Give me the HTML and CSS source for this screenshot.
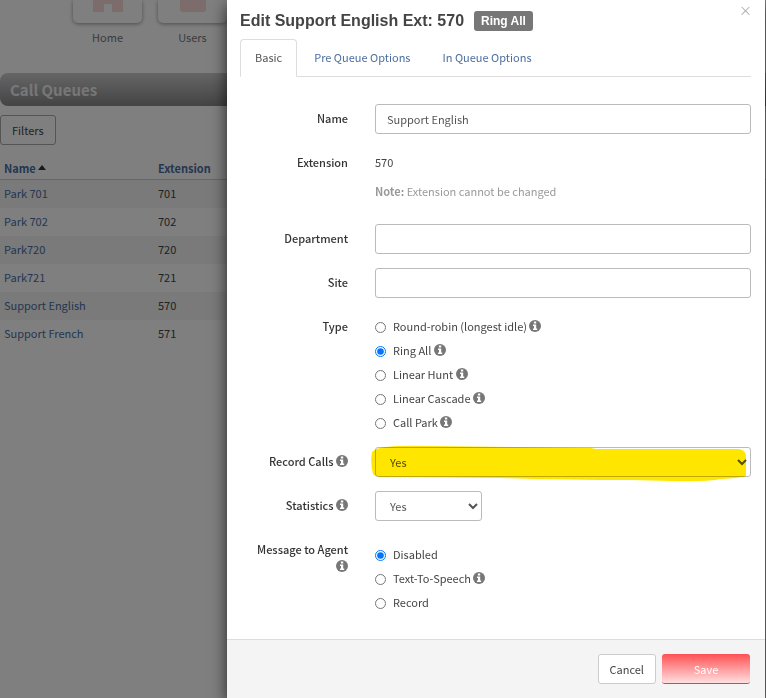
FILE: index.html
```
<!DOCTYPE html>
<html lang="en">
<head>
  <meta charset="UTF-8">
  <meta name="viewport" content="width=device-width, initial-scale=1">
  <title>Call Queues</title>
  <link rel="stylesheet" href="styles.css">
</head>
<body>
  <svg class="sprite" aria-hidden="true">
    <symbol id="info" viewBox="0 0 12 12">
      <circle cx="6" cy="6" r="6" fill="#777"/>
      <path d="M4.900 1.600h2.300v1.900H4.900zM4 4.600h3.200v3.900h1v1.400H4V8.500h1V6H4z" fill="#fff"/>
    </symbol>
  </svg>

  <div class="page">
    <nav class="apps">
      <a class="app" href="#">
        <span class="tile"><svg width="30" height="30" viewBox="0 0 30 30"><path d="M15 2L0 14v16h11v-8h8v8h11V14z" fill="#f8d8d8"/></svg></span>
        Home
      </a>
      <a class="app" href="#">
        <span class="tile"><svg width="26" height="30" viewBox="0 0 26 30"><circle cx="13" cy="8" r="7" fill="#f8d8d8"/><path d="M0 17h26v10q0 3-3 3H3q-3 0-3-3z" fill="#f8d8d8"/></svg></span>
        Users
      </a>
    </nav>
    <h2 class="page-title">Call Queues</h2>
    <button class="btn filters" type="button">Filters</button>
    <table class="queues">
      <thead>
        <tr><th><a href="#">Name <span class="caret"></span></a></th><th><a href="#">Extension</a></th></tr>
      </thead>
      <tbody>
        <tr><td><a href="#">Park 701</a></td><td>701</td></tr>
        <tr><td><a href="#">Park 702</a></td><td>702</td></tr>
        <tr><td><a href="#">Park720</a></td><td>720</td></tr>
        <tr><td><a href="#">Park721</a></td><td>721</td></tr>
        <tr><td><a href="#">Support English</a></td><td>570</td></tr>
        <tr><td><a href="#">Support French</a></td><td>571</td></tr>
      </tbody>
    </table>
  </div>

  <div class="backdrop"></div>

  <form class="modal" role="dialog" aria-labelledby="modal-title">
    <button class="close" type="button" aria-label="Close">&times;</button>
    <header class="modal-header">
      <h1 id="modal-title">Edit Support English Ext: 570</h1>
      <span class="badge">Ring All</span>
    </header>

    <nav class="tabs">
      <a class="tab active" href="#">Basic</a>
      <a class="tab" href="#">Pre Queue Options</a>
      <a class="tab" href="#">In Queue Options</a>
    </nav>

    <div class="modal-body">
      <div class="row">
        <label class="label" for="name">Name</label>
        <input class="control" id="name" type="text" value="Support English">
      </div>
      <div class="row">
        <span class="label">Extension</span>
        <div class="static">
          <p>570</p>
          <p class="note"><b>Note:</b> Extension cannot be changed</p>
        </div>
      </div>
      <div class="row">
        <label class="label" for="department">Department</label>
        <input class="control" id="department" type="text">
      </div>
      <div class="row">
        <label class="label" for="site">Site</label>
        <input class="control" id="site" type="text">
      </div>
      <div class="row" role="radiogroup" aria-labelledby="type-label">
        <span class="label" id="type-label">Type</span>
        <div class="radios">
          <label><input type="radio" name="type">Round-robin (longest idle) <svg class="info"><use href="#info"/></svg></label>
          <label><input type="radio" name="type" checked>Ring All <svg class="info"><use href="#info"/></svg></label>
          <label><input type="radio" name="type">Linear Hunt <svg class="info"><use href="#info"/></svg></label>
          <label><input type="radio" name="type">Linear Cascade <svg class="info"><use href="#info"/></svg></label>
          <label><input type="radio" name="type">Call Park <svg class="info"><use href="#info"/></svg></label>
        </div>
      </div>
      <div class="row">
        <label class="label" for="record">Record Calls <svg class="info"><use href="#info"/></svg></label>
        <div class="marked">
          <select class="control" id="record"><option>Yes</option><option>No</option></select>
          <svg class="marker" viewBox="0 0 376 38" preserveAspectRatio="none" aria-hidden="true">
            <path d="M1 7Q5 3 14 2Q30 0 60 1Q140 2 220 3L225 4H368Q375 5 375 12V31Q370 33 350 34Q335 37 300 36L260 35Q200 35 130 33L20 32Q6 33 2 29Q-1 18 1 7z" fill="#ffe600"/>
          </svg>
        </div>
      </div>
      <div class="row">
        <label class="label" for="statistics">Statistics <svg class="info"><use href="#info"/></svg></label>
        <select class="control short" id="statistics"><option>Yes</option><option>No</option></select>
      </div>
      <div class="row" role="radiogroup" aria-labelledby="message-label">
        <span class="label" id="message-label">Message to Agent <svg class="info"><use href="#info"/></svg></span>
        <div class="radios lower">
          <label><input type="radio" name="message" checked>Disabled</label>
          <label><input type="radio" name="message">Text-To-Speech <svg class="info"><use href="#info"/></svg></label>
          <label><input type="radio" name="message">Record</label>
        </div>
      </div>
    </div>

    <footer class="modal-footer">
      <button class="btn" type="button">Cancel</button>
      <button class="btn save" type="submit">Save</button>
    </footer>
  </form>
</body>
</html>
```
FILE: styles.css
```
* {
  box-sizing: border-box;
}

body {
  margin: 0;
  min-height: 100vh;
  overflow: hidden;
  background: #fff;
  color: #444;
  font-family: "Noto Sans CJK SC", "Open Sans", sans-serif;
  font-size: 11px;
  line-height: 20px;
}

a {
  color: #4a6ea0;
  text-decoration: none;
}

p {
  margin: 0;
}

input, select, button {
  font: inherit;
  color: #555;
}

.sprite {
  position: absolute;
  width: 0;
  height: 0;
}

/* page behind the dialog */

.apps {
  display: flex;
  gap: 16px;
  height: 73px;
  padding-left: 73px;
}

.app {
  width: 69px;
  text-align: center;
  color: #777;
}

.tile {
  display: flex;
  align-items: flex-end;
  justify-content: center;
  height: 23px;
  margin-bottom: 4px;
  padding-bottom: 11px;
  border-radius: 0 0 5px 5px;
  box-shadow: 0 1px 4px rgba(0, 0, 0, 0.4);
}

.page-title {
  margin: 0;
  padding-left: 10px;
  border-radius: 8px 0 0 8px;
  background: linear-gradient(#ccc, #888);
  color: #eee;
  font-size: 15px;
  line-height: 33px;
}

.btn {
  height: 30px;
  padding: 0 11px;
  border: 1px solid #ccc;
  border-radius: 3px;
  background: #fff;
  color: #444;
}

.filters {
  display: block;
  margin: 9px 0 12px;
  border-color: #aaa;
}

.queues {
  width: 100%;
  border-collapse: collapse;
}

.queues th,
.queues td {
  padding: 3px 4px 5px;
  text-align: left;
}

.queues th {
  padding: 1px 4px;
  border-bottom: 1px solid #ccc;
}

.queues th:first-child {
  width: 154px;
}

.queues tbody tr:nth-child(odd) {
  background: #f4f4f4;
}

.caret {
  display: inline-block;
  border: 4px solid transparent;
  border-top: 0;
  border-bottom: 5px solid #333;
  vertical-align: 3px;
}

.backdrop {
  position: fixed;
  inset: 0;
  background: rgba(0, 0, 0, 0.5);
}

/* dialog */

.modal {
  position: absolute;
  top: 0;
  right: 1px;
  left: 227px;
  display: flex;
  flex-direction: column;
  min-height: 100vh;
  background: #fff;
  box-shadow: 0 5px 15px rgba(0, 0, 0, 0.7);
}

.close {
  position: absolute;
  top: 1px;
  right: 13px;
  padding: 0;
  border: 0;
  background: none;
  color: #aaa;
  font-size: 13px;
  line-height: 18px;
}

.modal-header {
  display: flex;
  align-items: center;
  gap: 10px;
  padding: 11px 13px 8px;
  font-family: "Liberation Sans", Arial, sans-serif;
}

.modal-header h1 {
  margin: 0;
  font-size: 16px;
  line-height: 20px;
}

.badge {
  padding: 0 7px;
  border-radius: 3px;
  background: #777;
  color: #fff;
  font-size: 12px;
  font-weight: bold;
  line-height: 20px;
}

.tabs {
  display: flex;
  gap: 2px;
  margin: 0 14px 0 13px;
  border-bottom: 1px solid #ddd;
}

.tab {
  margin-bottom: -1px;
  padding: 7px 14px 9px;
  border: 1px solid transparent;
}

.tab.active {
  border-color: #ddd #ddd #fff;
  border-radius: 4px 4px 0 0;
  background: #fff;
  color: #555;
}

.modal-body {
  display: flex;
  flex-direction: column;
  gap: 14px;
  padding: 27px 14px 26px 13px;
}

.row {
  display: grid;
  grid-template-columns: 108px 1fr;
  column-gap: 27px;
}

.label {
  padding: 6px 0 0 10px;
  color: #333;
  font-weight: 500;
  line-height: 17px;
  text-align: right;
}

.info {
  width: 12px;
  height: 12px;
  vertical-align: -1px;
}

.control {
  width: 100%;
  height: 30px;
  padding: 0 11px;
  border: 1px solid #bbb;
  border-radius: 3px;
  background: #fff;
}

select.control {
  padding: 0 0 0 10px;
}

.control.short {
  width: 107px;
}

.static {
  padding: 4px 0 9px;
}

.note {
  margin-top: 9px;
  color: #999;
}

.radios {
  display: flex;
  flex-direction: column;
  align-items: flex-start;
  gap: 4px;
  padding: 4px 0 1px;
  color: #444;
}

.radios.lower {
  padding-top: 9px;
}

.radios input {
  width: 11px;
  height: 11px;
  margin: 0 7px 0 0;
  vertical-align: -2px;
}

.marked {
  position: relative;
}

/* highlighter stroke over the select */
.marker {
  position: absolute;
  top: -2px;
  left: -4px;
  width: 100%;
  height: 38px;
  mix-blend-mode: multiply;
  pointer-events: none;
}

.modal-footer {
  flex: 1;
  display: flex;
  align-items: flex-start;
  justify-content: flex-end;
  gap: 6px;
  padding: 14px 15px;
  border-top: 1px solid #ddd;
  background: #f4f4f4;
}

.save {
  width: 88px;
  border: 0;
  border-bottom: 1px solid #c46;
  background: linear-gradient(#ff5054, #ffe0e0);
  color: #fff;
}
```
